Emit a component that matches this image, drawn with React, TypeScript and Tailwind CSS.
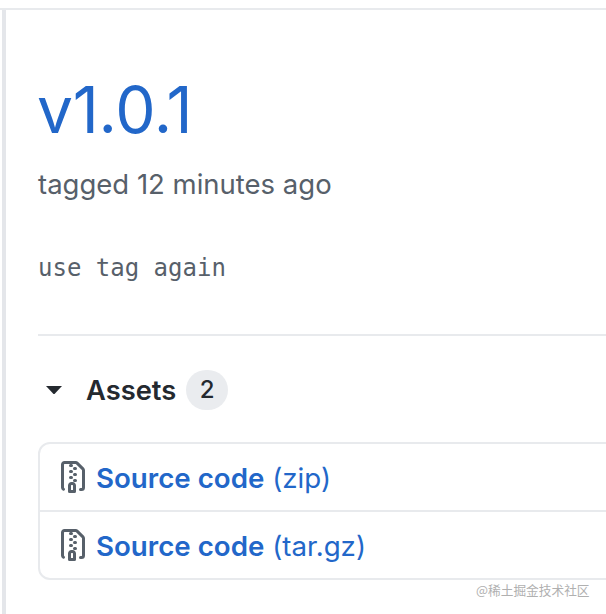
const ZipIcon = () => (
  <svg viewBox="0 0 16 16" width="32" height="32" fill="#57606a" className="shrink-0">
    <path d="M3.5 1.75v11.5c0 .09.048.173.126.217a.75.75 0 0 1-.752 1.298A1.748 1.748 0 0 1 2 13.25V1.75C2 .784 2.784 0 3.75 0h5.586c.464 0 .909.185 1.237.513l2.914 2.914c.329.328.513.773.513 1.237v8.586A1.75 1.75 0 0 1 12.25 15h-.5a.75.75 0 0 1 0-1.5h.5a.25.25 0 0 0 .25-.25V4.664a.25.25 0 0 0-.073-.177L9.513 1.573a.25.25 0 0 0-.177-.073H7.25a.75.75 0 0 1 0 1.5h-.5a.75.75 0 0 1 0-1.5h-3a.25.25 0 0 0-.25.25Zm3.75 8.75h.5c.966 0 1.75.784 1.75 1.75v3a.75.75 0 0 1-.75.75h-2.5a.75.75 0 0 1-.75-.75v-3c0-.966.784-1.75 1.75-1.75ZM6 5.25a.75.75 0 0 1 .75-.75h.5a.75.75 0 0 1 0 1.5h-.5A.75.75 0 0 1 6 5.25Zm.75 2.25h.5a.75.75 0 0 1 0 1.5h-.5a.75.75 0 0 1 0-1.5ZM8 6.75A.75.75 0 0 1 8.75 6h.5a.75.75 0 0 1 0 1.5h-.5A.75.75 0 0 1 8 6.75ZM8.75 3h.5a.75.75 0 0 1 0 1.5h-.5a.75.75 0 0 1 0-1.5ZM8 9.75A.75.75 0 0 1 8.75 9h.5a.75.75 0 0 1 0 1.5h-.5A.75.75 0 0 1 8 9.75Zm-1 2.5v2.25h1v-2.25a.25.25 0 0 0-.25-.25h-.5a.25.25 0 0 0-.25.25Z" />
  </svg>
);

const AssetRow = ({ ext, last }: { ext: string; last?: boolean }) => (
  <div className={`flex items-center pl-[17px] ${last ? "h-[66px]" : "border-b-2 border-[#e8eaed] h-[68px]"}`}>
    <ZipIcon />
    <a className="ml-[7px] pt-[4px] text-[27.7px] leading-none text-[#2267c9]">
      <span className="font-semibold">Source code</span> <span>({ext})</span>
    </a>
  </div>
);

const App = () => {
  return (
    <div className="relative w-[606px] h-[614px] overflow-hidden bg-white pt-2 font-['Inter',sans-serif]">
      <div className="h-[614px] border-t-2 border-[#e8eaed]">
        <div className="ml-[2px] h-full border-l-[4px] border-[#e4e6ea] pl-[32px] pt-[76px] w-[660px]">
          <h1 className="-ml-px text-[64px] leading-[48px] h-[48px] text-[#2267c9] font-normal tracking-[-0.2px]">v1.0.1</h1>
          <p className="mt-[33px] text-[27.5px] leading-[34px] text-[#57606a]">tagged 12 minutes ago</p>
          <p className="mt-[50px] text-[24px] leading-[34px] text-[#57606a] font-['DejaVu_Sans_Mono',monospace]">use tag again</p>
          <div className="mt-[49px] border-t-2 border-[#e8eaed]" />
          <div className="mt-[34px] flex items-center h-[40px]">
            <svg viewBox="0 0 16 8" width="16" height="8" fill="#24292f" className="ml-[8px]">
              <path d="M0 0h16L9 7.4a1.4 1.4 0 0 1-2 0Z" />
            </svg>
            <span className="ml-[24px] pt-[2px] text-[27.3px] font-semibold text-[#24292f]">Assets</span>
            <span className="ml-[10px] flex items-center justify-center w-[42px] h-[40px] rounded-full bg-[#eaecef] text-[24px] font-medium text-[#24292f]">2</span>
          </div>
          <div className="mt-[32px] border-2 border-[#e8eaed] rounded-xl">
            <AssetRow ext="zip" />
            <AssetRow ext="tar.gz" last />
          </div>
        </div>
      </div>
      <span className="absolute left-[476px] top-[581px] text-[12.7px] leading-[18px] text-[#b0b0b0] font-['Noto_Sans_CJK_SC',sans-serif]">@稀土掘金技术社区</span>
    </div>
  );
};

export default App;
